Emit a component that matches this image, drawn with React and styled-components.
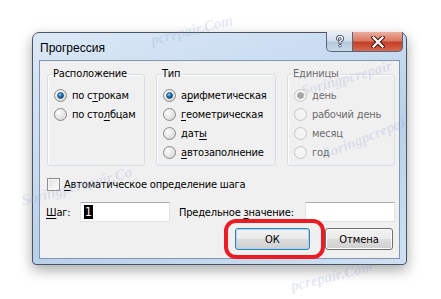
import React from 'react';
import styled, { createGlobalStyle } from 'styled-components';

const GlobalStyle = createGlobalStyle`
  html, body { margin: 0; padding: 0; background: #fff; }
  body { width: 441px; height: 299px; overflow: hidden; }
`;

const Stage = styled.div`
  position: relative;
  width: 441px;
  height: 299px;
  padding: 32px 0 0 32px;
  box-sizing: border-box;
  font-family: "DejaVu Sans Condensed", "DejaVu Sans", sans-serif;
  font-size: 11px;
  letter-spacing: -0.2px;
  color: #000;
`;

const Window = styled.div`
  position: relative;
  width: 375px;
  height: 233px;
  box-sizing: border-box;
  border: 1px solid #4b5562;
  border-radius: 7px 7px 4px 4px;
  background: linear-gradient(160deg, #dbe8f6 0%, #c6daf0 40%, #b9d0ea 60%, #cfe0f2 100%);
  box-shadow: 0 5px 14px rgba(0, 0, 0, 0.35);
  padding: 0 6px 5px 6px;
  display: flex;
  flex-direction: column;
`;

const TitleBar = styled.div`
  position: relative;
  z-index: 3;
  height: 27px;
  flex: none;
  display: flex;
  align-items: flex-start;
  justify-content: space-between;
`;

const Title = styled.span`
  font-family: "Liberation Sans", Arial, sans-serif;
  font-size: 12px;
  letter-spacing: 0;
  margin: 8px 0 0 1px;
`;

const CaptionButtons = styled.div`
  display: flex;
  margin: -1px -3px 0 0;
`;

const CaptionButton = styled.div`
  position: relative;
  z-index: 4;
  flex: none;
  width: ${p => p.$w}px;
  height: 20px;
  box-sizing: border-box;
  border: 1px solid #56667a;
  border-top: 0 none;
  border-left-width: ${p => p.$close ? 0 : 1}px;
  border-radius: ${p => p.$close ? '0 0 5px 0' : '0 0 0 5px'};
  background: ${p => p.$close
    ? 'linear-gradient(180deg, #eaae9f 0%, #db7962 45%, #c23e28 55%, #d9694f 100%)'
    : 'linear-gradient(180deg, #e9eff7 0%, #d3dfec 45%, #b6c8dc 55%, #cbd9e8 100%)'};
  display: flex;
  align-items: center;
  justify-content: center;
`;

const Client = styled.div`
  flex: 1;
  border: 1px solid #8296ad;
  background: #f0f0f0;
  display: flex;
  flex-direction: column;
`;

const GroupsRow = styled.div`
  display: flex;
  gap: 11px;
  padding: 6px 0 0 7px;
`;

const Group = styled.fieldset`
  margin: 0;
  width: ${p => p.$w}px;
  height: 99px;
  box-sizing: border-box;
  border: 1px solid #d5dfe5;
  border-radius: 3px;
  box-shadow: inset 1px 1px 0 #fff;
  padding: 5px 0 0 6px;
  min-width: 0;
`;

const Legend = styled.legend`
  padding: 0 1px;
  margin-left: -2px;
  line-height: 14px;
  color: ${p => p.$disabled ? '#6d6d6d' : '#000'};
`;

const OptionRow = styled.div`
  height: 19px;
  display: flex;
  align-items: center;
  gap: 5px;
  color: ${p => p.$disabled ? '#6d6d6d' : '#000'};
  white-space: nowrap;
`;

const U = styled.span`
  text-decoration: underline;
  text-underline-offset: 2px;
`;

const CheckRow = styled.label`
  display: flex;
  align-items: center;
  gap: 4px;
  margin: 11px 0 0 7px;
  height: 14px;
`;

const Box = styled.span`
  width: 11px;
  height: 11px;
  border: 1px solid #8e8f8f;
  background: linear-gradient(135deg, #dcdcdc 0%, #f3f3f3 60%, #fdfdfd 100%);
  box-shadow: inset 0 0 0 1px #f4f4f4;
`;

const StepRow = styled.div`
  display: flex;
  align-items: center;
  margin: 11px 0 0 6px;
`;

const FieldLabel = styled.span`
  width: ${p => p.$w}px;
  margin-left: ${p => p.$ml || 0}px;
`;

const Input = styled.div`
  width: 90px;
  height: 20px;
  box-sizing: border-box;
  background: #fff;
  border: 1px solid #e2e3ea;
  border-top-color: #abadb3;
  padding: 2px 3px;
  display: flex;
  align-items: center;
`;

const Selected = styled.span`
  background: #000;
  color: #fff;
  font-size: 12px;
  line-height: 14px;
  padding: 0 1px;
`;

const ButtonRow = styled.div`
  display: flex;
  justify-content: flex-end;
  gap: 15px;
  margin: 6px 6px 0 0;
`;

const ButtonWrap = styled.div`
  position: relative;
`;

const Button = styled.button`
  width: ${p => p.$w}px;
  height: 22px;
  border-radius: 3px;
  font: inherit;
  letter-spacing: 0;
  color: #000;
  padding: 0;
  background: linear-gradient(180deg, #f2f2f2 0%, #ebebeb 49%, #dddddd 51%, #cfcfcf 100%);
  border: 1px solid ${p => p.$default ? '#3c7fb1' : '#707070'};
  box-shadow: inset 0 0 0 1px ${p => p.$default ? '#a5d7f3' : '#fbfbfb'};
`;

const Highlight = styled.div`
  position: absolute;
  left: -11px;
  top: -9px;
  width: 101px;
  height: 40px;
  box-sizing: border-box;
  border: 4px solid #ec1c24;
  border-radius: 12px;
  pointer-events: none;
`;

const Watermark = styled.span`
  position: absolute;
  z-index: 1;
  left: ${p => p.$x}px;
  top: ${p => p.$y}px;
  transform: rotate(${p => p.$r}deg);
  font-family: "Liberation Serif", serif;
  font-style: italic;
  font-weight: bold;
  font-size: 15px;
  letter-spacing: 0;
  color: rgba(140, 155, 205, 0.24);
  white-space: nowrap;
  pointer-events: none;
`;

const Radio = ({ checked, disabled }) => (
  <svg width="13" height="13" viewBox="0 0 13 13">
    <defs>
      <radialGradient id="rbg" cx="0.35" cy="0.35" r="0.8">
        <stop offset="0" stopColor="#fdfdfd" />
        <stop offset="1" stopColor="#d4d4d4" />
      </radialGradient>
      <radialGradient id="rdot" cx="0.4" cy="0.35" r="0.7">
        <stop offset="0" stopColor="#8fd0f5" />
        <stop offset="0.5" stopColor="#1f74b6" />
        <stop offset="1" stopColor="#0f3f78" />
      </radialGradient>
    </defs>
    <circle cx="6.5" cy="6.5" r="6" fill={disabled ? '#f4f4f4' : 'url(#rbg)'} stroke={disabled ? '#c5c5c5' : '#8a8a8a'} />
    {checked && <circle cx="6.5" cy="6.5" r="3" fill={disabled ? '#a8a8a8' : 'url(#rdot)'} stroke={disabled ? '#8f8f8f' : '#0c3764'} strokeWidth="0.6" />}
  </svg>
);

const Option = ({ children, checked, disabled }) => (
  <OptionRow $disabled={disabled}>
    <Radio checked={checked} disabled={disabled} />
    <span>{children}</span>
  </OptionRow>
);

export default function App() {
  return (
    <Stage>
      <GlobalStyle />
      <Window>
        <TitleBar>
          <Title>Прогрессия</Title>
          <CaptionButtons>
            <CaptionButton $w={27}>
              <svg width="10" height="13" viewBox="0 0 10 13">
                <path d="M2.5 4 Q2.5 1.5 5 1.5 Q7.5 1.5 7.5 3.8 Q7.5 5.3 5 6.3 L5 8" fill="none" stroke="#3a4656" strokeWidth="3" strokeLinecap="round" />
                <path d="M2.5 4 Q2.5 1.5 5 1.5 Q7.5 1.5 7.5 3.8 Q7.5 5.3 5 6.3 L5 8" fill="none" stroke="#fff" strokeWidth="1.4" strokeLinecap="round" />
                <circle cx="5" cy="10.6" r="1.3" fill="#fff" stroke="#3a4656" strokeWidth="0.8" />
              </svg>
            </CaptionButton>
            <CaptionButton $w={50} $close>
              <svg width="14" height="12" viewBox="0 0 14 12">
                <path d="M2.5 1.5 L11.5 10.5 M11.5 1.5 L2.5 10.5" stroke="#4a150e" strokeWidth="4.2" strokeLinecap="square" />
                <path d="M2.5 1.5 L11.5 10.5 M11.5 1.5 L2.5 10.5" stroke="#fff" strokeWidth="2.2" strokeLinecap="square" />
              </svg>
            </CaptionButton>
          </CaptionButtons>
        </TitleBar>
        <Client>
          <GroupsRow>
            <Group $w={98}>
              <Legend>Расположение</Legend>
              <Option checked>по с<U>т</U>рокам</Option>
              <Option>по сто<U>л</U>бцам</Option>
            </Group>
            <Group $w={120}>
              <Legend>Тип</Legend>
              <Option checked>а<U>р</U>ифметическая</Option>
              <Option><U>г</U>еометрическая</Option>
              <Option>дат<U>ы</U></Option>
              <Option><U>а</U>втозаполнение</Option>
            </Group>
            <Group $w={108}>
              <Legend $disabled>Единицы</Legend>
              <Option checked disabled>день</Option>
              <Option disabled>рабочий день</Option>
              <Option disabled>месяц</Option>
              <Option disabled>год</Option>
            </Group>
          </GroupsRow>
          <CheckRow>
            <Box />
            <span><U>А</U>втоматическое определение шага</span>
          </CheckRow>
          <StepRow>
            <FieldLabel $w={34}><U>Ш</U>аг:</FieldLabel>
            <Input><Selected>1</Selected></Input>
            <FieldLabel $w={126} $ml={9}>Предельное <U>з</U>начение:</FieldLabel>
            <Input />
          </StepRow>
          <ButtonRow>
            <ButtonWrap>
              <Button $w={75} $default>ОК</Button>
              <Highlight />
            </ButtonWrap>
            <Button $w={68}>Отмена</Button>
          </ButtonRow>
        </Client>
      </Window>
      <Watermark $x={150} $y={22} $r={-14}>pcrepair.Com</Watermark>
      <Watermark $x={300} $y={70} $r={-16}>Soringpcrepair</Watermark>
      <Watermark $x={320} $y={130} $r={-22}>Soringpcrepai</Watermark>
      <Watermark $x={20} $y={178} $r={-15}>Soringpcrepair.Co</Watermark>
      <Watermark $x={290} $y={268} $r={-14}>pcrepair.Com</Watermark>
    </Stage>
  );
}
